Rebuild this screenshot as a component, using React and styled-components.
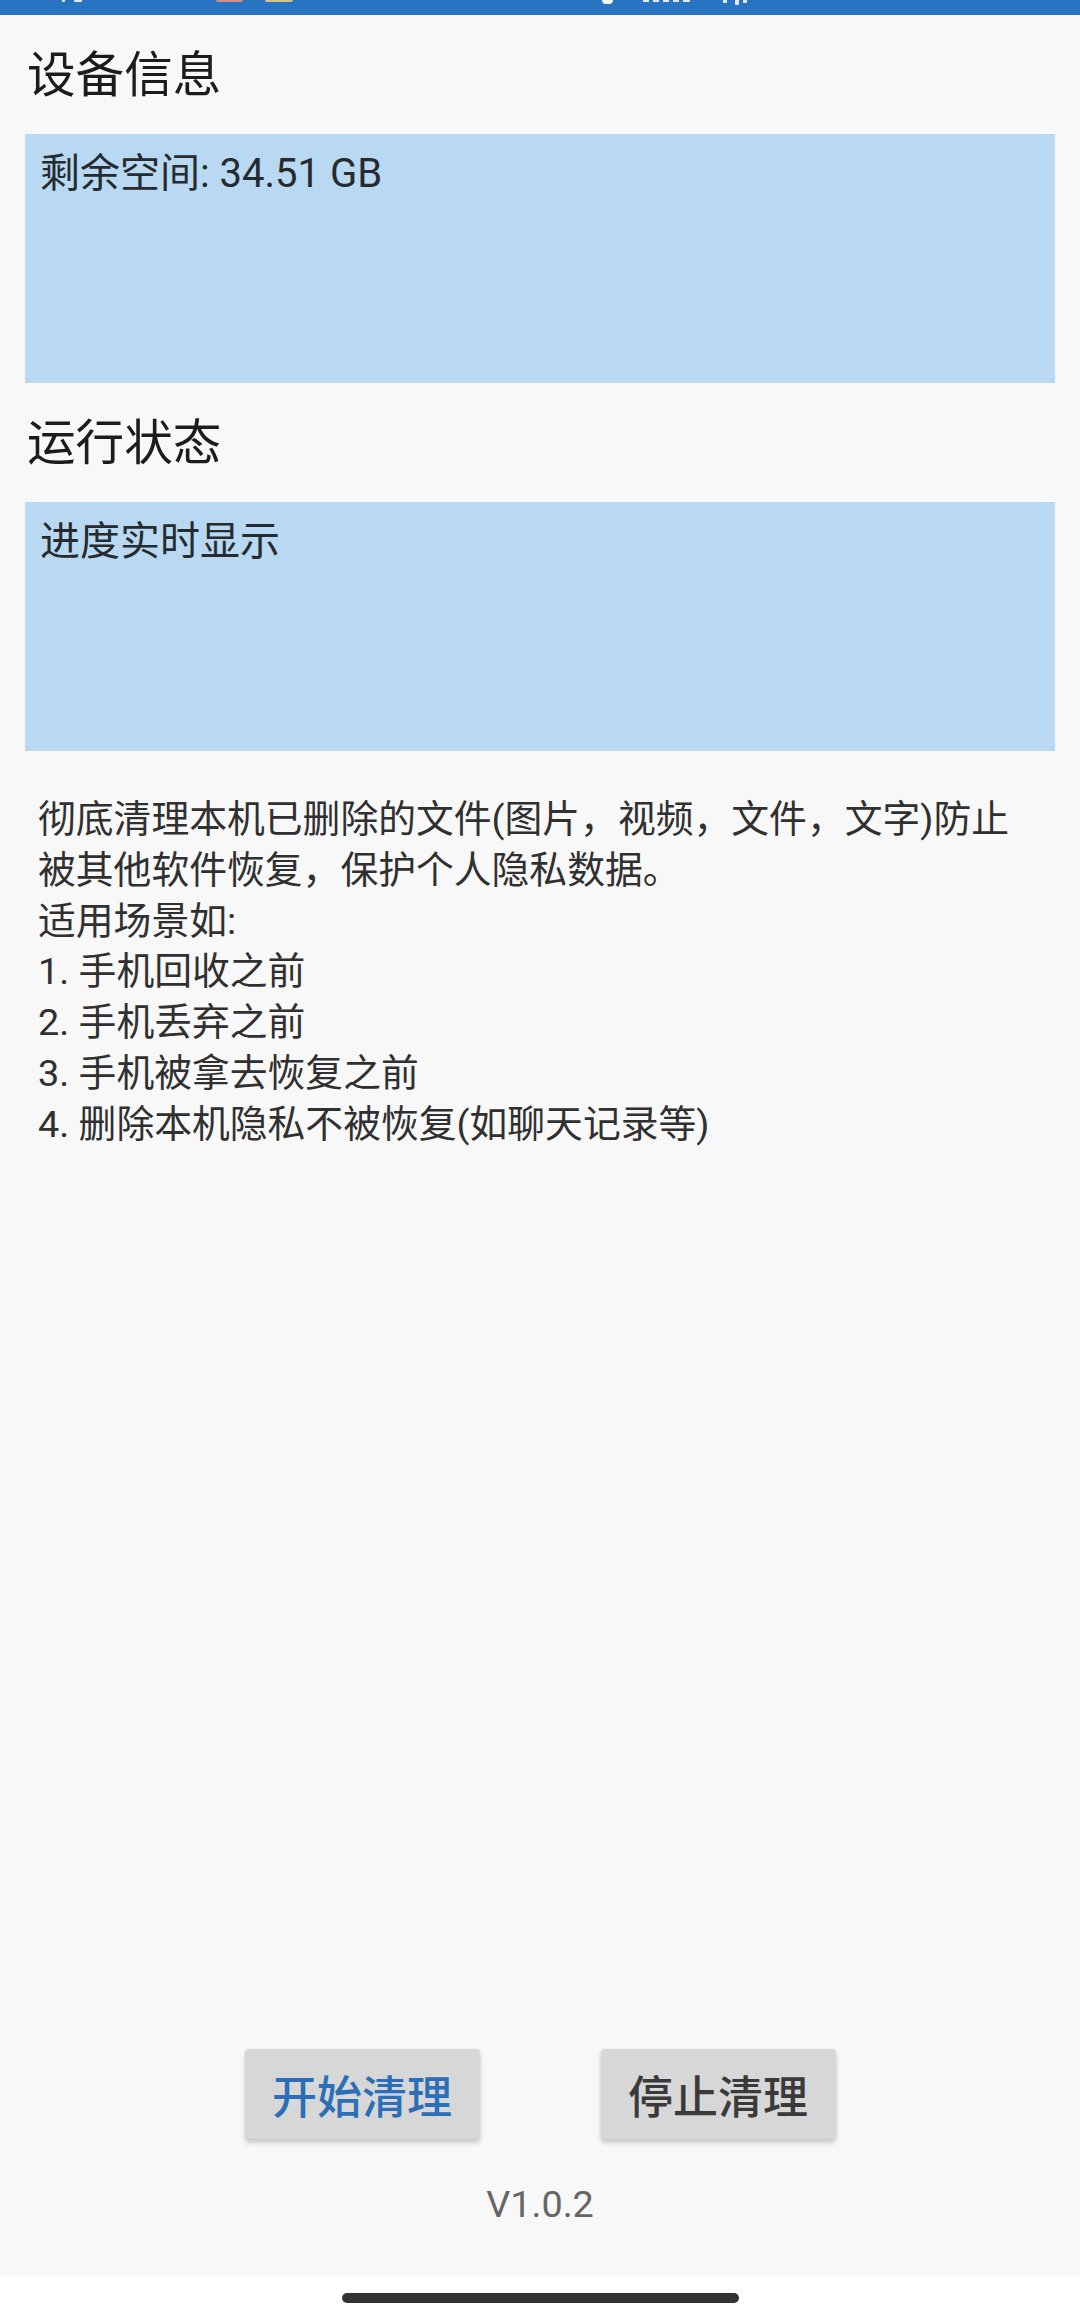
import React from "react";
import styled, { createGlobalStyle } from "styled-components";

const GlobalStyle = createGlobalStyle`
	html, body {
		margin: 0;
		padding: 0;
		background: #ffffff;
	}
	body {
		font-family: Roboto, "Noto Sans CJK SC", sans-serif;
	}
`;

const Screen = styled.div`
	width: 1080px;
	height: 2321px;
	display: flex;
	flex-direction: column;
	overflow: hidden;
`;

const StatusBar = styled.div`
	height: 15px;
	flex-shrink: 0;
	background-color: #2874c1;
	display: flex;
	align-items: flex-start;
`;

// the status bar is cut off, only the bottoms of its icons show
const StatusBit = styled.span`
	display: block;
	margin-left: ${(props) => props.gap}px;
	width: ${(props) => props.w}px;
	height: ${(props) => props.h}px;
	background-color: ${(props) => props.color};
	border-radius: 0 0 ${(props) => props.r}px ${(props) => props.r}px;
`;

const Main = styled.div`
	flex: 1;
	background-color: #f8f8f8;
	padding: 0 25px;
	display: flex;
	flex-direction: column;
`;

const Title = styled.div`
	margin-top: ${(props) => props.top}px;
	padding-left: 2px;
	font-size: 48.6px;
	line-height: 64px;
	color: #1c1c1c;
`;

const InfoBox = styled.div`
	margin-top: 26px;
	height: 249px;
	box-sizing: border-box;
	padding: 13px 15px;
	background-color: #b9d9f2;
	font-size: 40px;
	line-height: 54px;
	color: #262b30;
`;

const Description = styled.div`
	margin-top: 43px;
	padding-left: 13px;
	font-size: 37.8px;
	line-height: 50.8px;
	color: #303030;
	white-space: pre-line;
`;

const Spacer = styled.div`
	flex: 1;
`;

const ButtonRow = styled.div`
	display: flex;
	justify-content: center;
	gap: 121px;
`;

const ActionButton = styled.div`
	width: 235px;
	height: 90px;
	display: flex;
	align-items: center;
	justify-content: center;
	background-color: #d7d7d7;
	border-radius: 4px;
	box-shadow: 0 4px 5px rgba(0, 0, 0, 0.18), 0 0 2px rgba(0, 0, 0, 0.1);
	font-size: 45px;
	font-weight: 500;
	color: ${(props) => (props.primary ? "#2c6fb8" : "#3a3a3a")};
`;

const Version = styled.div`
	margin-top: 40px;
	margin-bottom: 46px;
	text-align: center;
	font-size: 37.8px;
	line-height: 50px;
	color: #666666;
`;

const NavArea = styled.div`
	height: 46px;
	flex-shrink: 0;
	background-color: #ffffff;
	display: flex;
	justify-content: center;
	padding-top: 18px;
	box-sizing: border-box;
`;

const HomeIndicator = styled.div`
	width: 397px;
	height: 10px;
	border-radius: 5px;
	background-color: #333333;
`;

const statusBits = [
	{ gap: 62, w: 3, h: 2, color: "#dfe9f6", r: 1 },
	{ gap: 9, w: 8, h: 2, color: "#dfe9f6", r: 1 },
	{ gap: 134, w: 27, h: 2, color: "#d48d8f", r: 6 },
	{ gap: 22, w: 28, h: 2, color: "#d8c28c", r: 6 },
	{ gap: 309, w: 11, h: 4, color: "#f4f7fb", r: 5 },
	{ gap: 30, w: 6, h: 2, color: "#dfe9f6", r: 0 },
	{ gap: 4, w: 6, h: 2, color: "#dfe9f6", r: 0 },
	{ gap: 4, w: 6, h: 2, color: "#dfe9f6", r: 0 },
	{ gap: 4, w: 6, h: 2, color: "#dfe9f6", r: 0 },
	{ gap: 4, w: 7, h: 2, color: "#dfe9f6", r: 0 },
	{ gap: 33, w: 4, h: 3, color: "#dfe9f6", r: 1 },
	{ gap: 8, w: 4, h: 5, color: "#dfe9f6", r: 1 },
	{ gap: 4, w: 4, h: 3, color: "#dfe9f6", r: 1 },
];

const description = `彻底清理本机已删除的文件(图片，视频，文件，文字)防止
被其他软件恢复，保护个人隐私数据。
适用场景如:
1. 手机回收之前
2. 手机丢弃之前
3. 手机被拿去恢复之前
4. 删除本机隐私不被恢复(如聊天记录等)`;

export default function App() {
	return (
		<>
			<GlobalStyle />
			<Screen>
				<StatusBar>
					{statusBits.map((bit, i) => (
						<StatusBit key={i} {...bit} />
					))}
				</StatusBar>
				<Main>
					<Title top={29}>设备信息</Title>
					<InfoBox>剩余空间: 34.51 GB</InfoBox>
					<Title top={29}>运行状态</Title>
					<InfoBox>进度实时显示</InfoBox>
					<Description>{description}</Description>
					<Spacer />
					<ButtonRow>
						<ActionButton primary>开始清理</ActionButton>
						<ActionButton>停止清理</ActionButton>
					</ButtonRow>
					<Version>V1.0.2</Version>
				</Main>
				<NavArea>
					<HomeIndicator />
				</NavArea>
			</Screen>
		</>
	);
}
